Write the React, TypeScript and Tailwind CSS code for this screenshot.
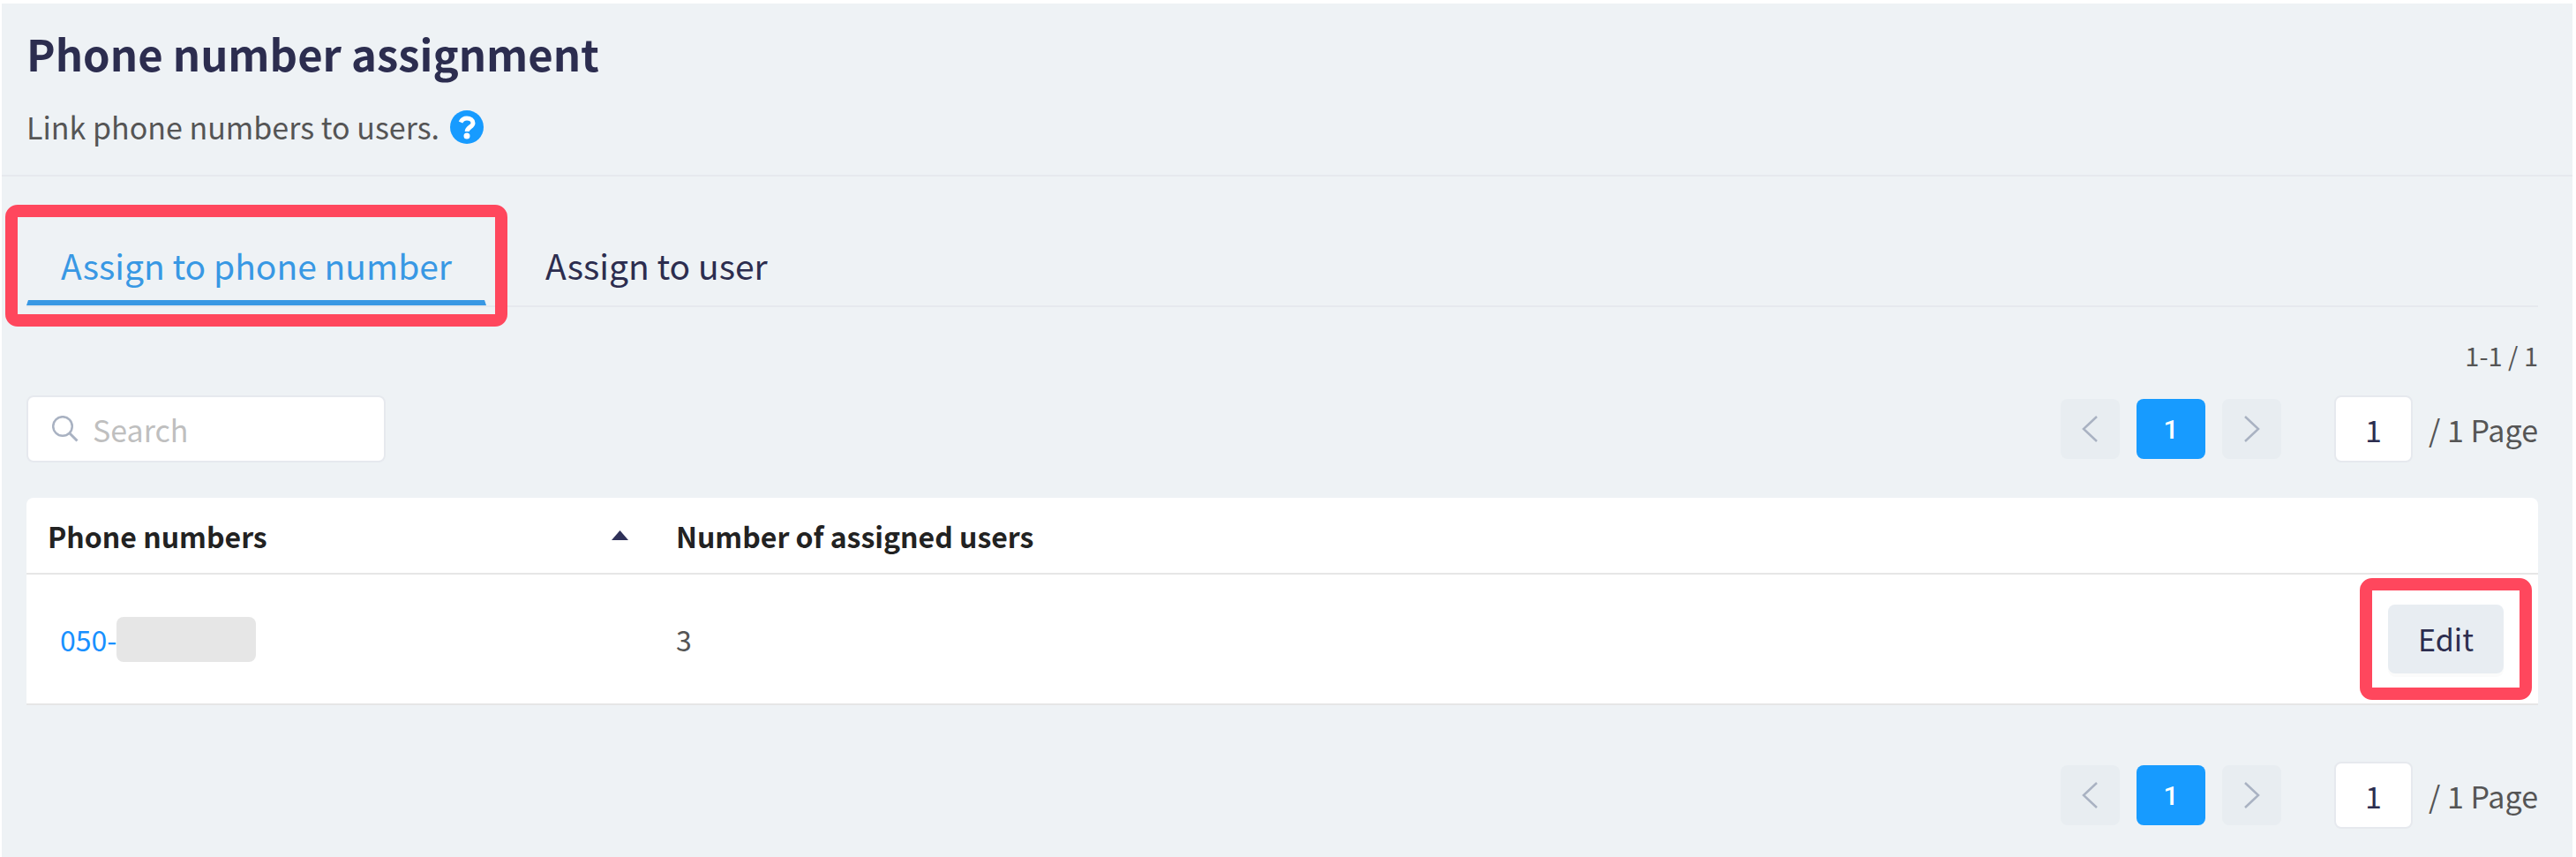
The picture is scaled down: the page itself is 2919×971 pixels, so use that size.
import { useState } from 'react';
import type { ReactNode } from 'react';
import clsx from 'clsx';

const tabs = ['Assign to phone number', 'Assign to user'];

const rows = [{ prefix: '050-', users: 3 }];

export default function App() {
  const [activeTab, setActiveTab] = useState(tabs[0]);

  return (
    <div className="min-h-screen bg-white pt-1 pr-1 pl-0.5">
      <main className="min-h-[967px] bg-[#eef2f5] font-['Noto_Sans_CJK_JP','Noto_Sans',sans-serif] text-[#555555]">
        <header className="border-b-2 border-[#e6e9ee] px-7 pt-6 pb-7">
          <h1 className="text-[49px] leading-[64px] font-bold text-[#2c2d4f]">
            Phone number assignment
          </h1>
          <div className="mt-[26px] flex items-center gap-3">
            <p className="text-[34px] leading-[52px]">
              Link phone numbers to users.
            </p>
            <button aria-label="Help">
              <HelpIcon />
            </button>
          </div>
        </header>

        <div className="pr-[39px] pl-7">
          <nav className="mt-14 flex gap-7 border-b-2 border-[#e6e9ee]">
            {tabs.map((tab) => (
              <Callout key={tab} show={tab === tabs[0]} inset="-inset-6">
                <button
                  onClick={() => setActiveTab(tab)}
                  className={clsx(
                    'border-x-2 border-b-[6px] border-x-transparent px-[37px] pt-3 pb-2 text-[39px] leading-[64px]',
                    tab === activeTab
                      ? 'border-b-[#3898e4] text-[#3898e4]'
                      : 'border-b-transparent text-[#2c2d4f]',
                  )}
                >
                  {tab}
                </button>
              </Callout>
            ))}
          </nav>

          <p className="mt-8 text-right text-[29px] leading-[44px]">1-1 / 1</p>

          <div className="mt-6 flex items-center justify-between">
            <label className="flex h-[76px] w-[407px] items-center gap-4 rounded-lg border-2 border-[#e6e9ee] bg-white pl-[27px]">
              <SearchIcon />
              <input
                type="text"
                aria-label="Search"
                placeholder="Search"
                className="w-full min-w-0 bg-transparent text-[34px] outline-none placeholder:text-[#bfbfbf]"
              />
            </label>
            <Pagination />
          </div>

          <table className="mt-10 w-full table-fixed border-separate border-spacing-0 rounded-t-lg bg-white text-left">
            <thead className="text-[32px] leading-[48px] text-[#222222]">
              <tr className="h-[87px]">
                <th className="w-[712px] border-b-2 border-[#e6e6e6] pr-[30px] pl-6 font-bold">
                  <div className="flex items-center justify-between">
                    Phone numbers
                    <SortIcon />
                  </div>
                </th>
                <th className="border-b-2 border-[#e6e6e6] px-6 font-bold">
                  Number of assigned users
                </th>
                <th className="w-60 border-b-2 border-[#e6e6e6]" />
              </tr>
            </thead>
            <tbody className="text-[32px] leading-[48px]">
              {rows.map((row) => (
                <tr key={row.prefix} className="h-[148px]">
                  <td className="border-b-2 border-[#e6e6e6] px-[38px]">
                    <a href="#edit" className="flex items-center text-[#1890ff]">
                      {row.prefix}
                      <span className="h-[51px] w-[158px] rounded-lg bg-[#e6e6e6]" />
                    </a>
                  </td>
                  <td className="border-b-2 border-[#e6e6e6] px-6">{row.users}</td>
                  <td className="border-b-2 border-[#e6e6e6] pr-[39px]">
                    <div className="flex justify-end">
                      <Callout show inset="-inset-x-8 -inset-y-[30px]">
                        <button className="h-[78px] rounded-lg bg-[#e8edf2] px-[34px] text-[34px] text-[#2c2d4f] shadow-[0_4px_0_rgba(0,0,0,0.015)]">
                          Edit
                        </button>
                      </Callout>
                    </div>
                  </td>
                </tr>
              ))}
            </tbody>
          </table>

          <div className="mt-16 flex justify-end">
            <Pagination />
          </div>
        </div>
      </main>
    </div>
  );
}

function Callout({
  show,
  inset,
  children,
}: {
  show: boolean;
  inset: string;
  children: ReactNode;
}) {
  return (
    <div className="relative">
      {children}
      {show && (
        <div
          className={clsx(
            'pointer-events-none absolute rounded-[14px] border-[14px] border-[#ff475d]',
            inset,
          )}
        />
      )}
    </div>
  );
}

function Pagination() {
  return (
    <div className="flex items-center">
      <button
        aria-label="Previous page"
        className="flex h-[68px] w-[67px] items-center justify-center rounded-lg bg-[#e8edf1]"
      >
        <Chevron points="17,1 2,15 17,29" />
      </button>
      <button className="mx-[19px] h-[68px] w-[78px] rounded-lg bg-[#179bff] font-[Roboto,sans-serif] text-[30px] font-medium text-white">
        1
      </button>
      <button
        aria-label="Next page"
        className="flex h-[68px] w-[67px] items-center justify-center rounded-lg bg-[#e8edf1]"
      >
        <Chevron points="2,1 17,15 2,29" />
      </button>
      <label className="ml-[60px] flex items-center gap-[18px] text-[34px]">
        <input
          type="text"
          defaultValue="1"
          aria-label="Page"
          className="h-[76px] w-[89px] rounded-lg border-2 border-[#e6e9ee] bg-white text-center text-[#2c2d4f] outline-none"
        />
        / 1 Page
      </label>
    </div>
  );
}

function Chevron({ points }: { points: string }) {
  return (
    <svg width="19" height="30" viewBox="0 0 19 30" fill="none">
      <polyline points={points} stroke="#a9b2c2" strokeWidth="2.5" />
    </svg>
  );
}

function HelpIcon() {
  return (
    <svg width="38" height="38" viewBox="0 0 38 38" fill="none">
      <circle cx="19" cy="19" r="19" fill="#179bff" />
      <path
        d="M12 13.5C13.5 10.5 15.8 9 19 9c4 0 7 2.2 7 5.4 0 4.4-6.8 4.6-6.8 9.6"
        stroke="#fff"
        strokeWidth="5"
      />
      <circle cx="19" cy="29" r="3.5" fill="#fff" />
    </svg>
  );
}

function SearchIcon() {
  return (
    <svg
      width="30"
      height="30"
      viewBox="0 0 30 30"
      fill="none"
      stroke="#a9b2c2"
      strokeWidth="2.5"
      className="shrink-0"
    >
      <circle cx="12" cy="12" r="10.8" />
      <path d="M20 20l8.5 8.5" strokeWidth="3" />
    </svg>
  );
}

function SortIcon() {
  return (
    <svg width="19" height="11" viewBox="0 0 19 11" fill="#2f3159">
      <path d="M9.5 0L19 11H0z" />
    </svg>
  );
}
